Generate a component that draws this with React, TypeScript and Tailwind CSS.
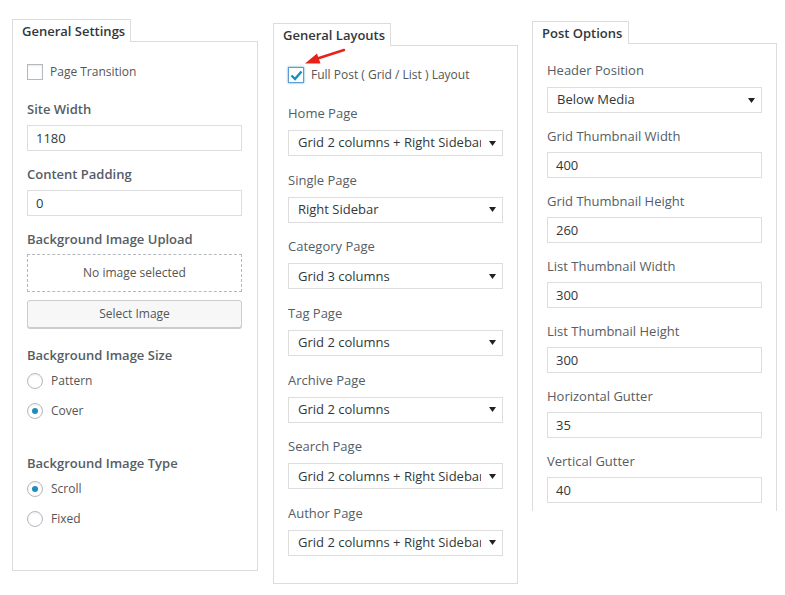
import type { ReactNode } from "react";

const font = { fontFamily: '"Open Sans", "Noto Sans", sans-serif' };

function Panel({
  title,
  tabWidth,
  children,
  className,
  boxClass,
}: {
  title: string;
  tabWidth: string;
  children: ReactNode;
  className: string;
  boxClass: string;
}) {
  return (
    <div className={`flex flex-col ${className}`}>
      <div
        className={`relative z-10 -mb-px h-[23px] border border-b-0 border-[#dcdcdc] bg-white pl-[9px] text-[13px] leading-[22px] font-semibold text-[#32373c] ${tabWidth}`}
      >
        {title}
      </div>
      <div className={`border-[#dcdcdc] bg-white px-[14px] ${boxClass}`}>{children}</div>
    </div>
  );
}

function Label({
  children,
  bold,
  className = "",
}: {
  children: ReactNode;
  bold?: boolean;
  className?: string;
}) {
  return (
    <div
      className={`h-5 text-[13px] leading-5 text-[#555d66] ${bold ? "font-semibold" : "font-normal"} ${className}`}
    >
      {children}
    </div>
  );
}

function TextInput({ value }: { value: string }) {
  return (
    <div className="h-[26px] w-[215px] border border-[#dddddd] px-[8px] text-[13px] leading-[24px] text-[#32373c]">
      {value}
    </div>
  );
}

function Select({ value }: { value: string }) {
  return (
    <div className="flex h-[26px] w-[215px] items-center border border-[#dddddd] pr-[6px] pl-[9px] text-[13px] text-[#32373c]">
      <span className="flex-1 overflow-hidden whitespace-nowrap">{value}</span>
      <svg width="7" height="5" viewBox="0 0 7 5" className="ml-[8px] shrink-0">
        <path d="M0 0h7L3.5 5z" fill="#222" />
      </svg>
    </div>
  );
}

function Radio({ label, checked, className = "" }: { label: string; checked?: boolean; className?: string }) {
  return (
    <div className={`flex h-5 items-center ${className}`}>
      <span className="flex h-4 w-4 items-center justify-center rounded-full border border-[#b4b9be] shadow-[inset_0_1px_2px_rgba(0,0,0,0.07)]">
        {checked && <span className="h-[6px] w-[6px] rounded-full bg-[#1e8cbe]" />}
      </span>
      <span className="ml-[8px] text-[12px] text-[#555]">{label}</span>
    </div>
  );
}

export default function App() {
  const layouts: [string, string][] = [
    ["Home Page", "Grid 2 columns + Right Sidebar"],
    ["Single Page", "Right Sidebar"],
    ["Category Page", "Grid 3 columns"],
    ["Tag Page", "Grid 2 columns"],
    ["Archive Page", "Grid 2 columns"],
    ["Search Page", "Grid 2 columns + Right Sidebar"],
    ["Author Page", "Grid 2 columns + Right Sidebar"],
  ];
  const posts: [string, string][] = [
    ["Grid Thumbnail Width", "400"],
    ["Grid Thumbnail Height", "260"],
    ["List Thumbnail Width", "300"],
    ["List Thumbnail Height", "300"],
    ["Horizontal Gutter", "35"],
    ["Vertical Gutter", "40"],
  ];

  return (
    <div className="relative flex h-[595px] w-[785px] items-start bg-white" style={font}>
      <Panel
        title="General Settings"
        tabWidth="w-[119px]"
        className="mt-[19px] ml-[12px] w-[246px]"
        boxClass="border h-[530px] pt-[20px]"
      >
        <div className="flex h-5 items-center">
          <span className="h-4 w-4 border border-[#b4b9be] shadow-[inset_0_1px_2px_rgba(0,0,0,0.1)]" />
          <span className="ml-[7px] text-[12px] text-[#555]">Page Transition</span>
        </div>
        <Label bold className="mt-[17px] mb-[6px]">Site Width</Label>
        <TextInput value="1180" />
        <Label bold className="mt-[13px] mb-[6px]">Content Padding</Label>
        <TextInput value="0" />
        <Label bold className="mt-[13px] mb-[5px]">Background Image Upload</Label>
        <div className="flex h-[38px] w-[215px] items-center justify-center border border-dashed border-[#b4b9be] text-[12px] text-[#555]">
          No image selected
        </div>
        <div className="mt-[8px] flex h-[28px] w-[215px] items-center justify-center rounded-[3px] border border-[#cccccc] bg-[#f7f7f7] text-[12px] text-[#555] shadow-[0_1px_0_#cccccc]">
          Select Image
        </div>
        <Label bold className="mt-[17px]">Background Image Size</Label>
        <Radio label="Pattern" className="mt-[6px]" />
        <Radio label="Cover" checked className="mt-[10px]" />
        <Label bold className="mt-[32px]">Background Image Type</Label>
        <Radio label="Scroll" checked className="mt-[6px]" />
        <Radio label="Fixed" className="mt-[10px]" />
      </Panel>

      <Panel
        title="General Layouts"
        tabWidth="w-[118px]"
        className="mt-[23px] ml-[15px] w-[245px]"
        boxClass="border h-[539px] pt-[19px]"
      >
        <div className="flex h-5 items-center">
          <span className="flex h-4 w-4 items-center justify-center border border-[#5b9dd9] shadow-[0_0_2px_rgba(30,140,190,0.8)]">
            <svg width="13" height="11" viewBox="0 0 13 11">
              <path d="M1.5 5.5l3.5 3.5L11.5 1.5" fill="none" stroke="#1e8cbe" strokeWidth="2.4" />
            </svg>
          </span>
          <span className="ml-[7px] text-[12px] text-[#555]">Full Post ( Grid / List ) Layout</span>
        </div>
        {layouts.map(([label, value], i) => (
          <div key={label} className={i === 0 ? "mt-[18px]" : "mt-[13.67px]"}>
            <Label className="mb-[7px]">{label}</Label>
            <Select value={value} />
          </div>
        ))}
      </Panel>

      <Panel
        title="Post Options"
        tabWidth="w-[97px]"
        className="mt-[21px] ml-[14px] w-[245px]"
        boxClass="border border-b-0 h-[468px] pt-[16px]"
      >
        <Label className="mb-[7px]">Header Position</Label>
        <Select value="Below Media" />
        {posts.map(([label, value]) => (
          <div key={label} className="mt-[13px]">
            <Label className="mb-[6px]">{label}</Label>
            <TextInput value={value} />
          </div>
        ))}
      </Panel>

      <svg
        className="pointer-events-none absolute top-[44px] left-[298px]"
        width="52"
        height="26"
        viewBox="0 0 52 26"
      >
        <line x1="46" y1="6" x2="18" y2="15" stroke="#e8221b" strokeWidth="2.5" strokeLinecap="round" />
        <polygon points="7,19.5 19,9.5 22.5,19.5" fill="#e8221b" />
      </svg>
    </div>
  );
}
